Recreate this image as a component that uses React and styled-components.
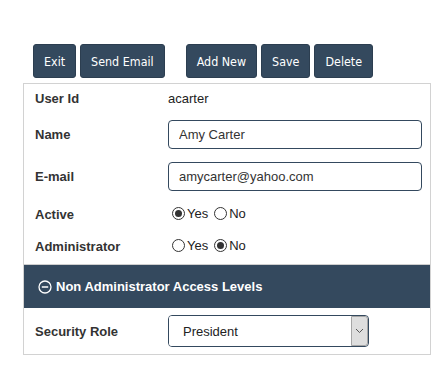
import React from 'react';
import styled, { createGlobalStyle } from 'styled-components';

const GlobalStyle = createGlobalStyle`
  body {
    margin: 8px;
    background: #fff;
    font-family: 'Liberation Sans', Arial, sans-serif;
    color: #333;
  }
`;

const Page = styled.div`
  padding: 36px 0 0 15px;
`;

const Toolbar = styled.div`
  display: flex;
  gap: 21px;
  padding-left: 10px;
  margin-bottom: 5px;
`;

const ButtonGroup = styled.div`
  display: flex;
  gap: 4px;
`;

const Button = styled.button`
  height: 34px;
  padding: 0 10px;
  background: #34495e;
  color: #fff;
  border: 1px solid #2c3e50;
  border-radius: 3px;
  font-family: 'DejaVu Sans Condensed', 'DejaVu Sans', sans-serif;
  font-size: 12.4px;
  cursor: pointer;
`;

const Panel = styled.div`
  width: 408px;
  box-sizing: border-box;
  border: 1px solid #d2d2d2;
`;

const FormBody = styled.div`
  display: flex;
  flex-direction: column;
  gap: 12px;
  padding: 4px 0 9px;
`;

const Row = styled.div`
  display: grid;
  grid-template-columns: 133px 1fr;
  align-items: center;
  min-height: 20px;
  margin-top: ${(p) => p.$mt || 0}px;
  padding: ${(p) => p.$pad || '0'} 8px ${(p) => p.$pad || '0'} 11px;
`;

const Label = styled.div`
  font-size: 13px;
  font-weight: bold;
  color: #333;
  padding-top: ${(p) => (p.$low ? '2px' : '0')};
`;

const Value = styled.div`
  font-size: 13px;
  color: #222;
`;

const TextInput = styled.input`
  box-sizing: border-box;
  width: 100%;
  height: 29px;
  padding: 0 10px;
  border: 1px solid #34495e;
  border-radius: 4px;
  font-family: 'Liberation Sans', Arial, sans-serif;
  font-size: 13px;
  color: #333;
  outline: none;
`;

const RadioGroup = styled.div`
  display: flex;
  align-items: center;
  font-size: 13px;
  color: #222;
`;

const Option = styled.label`
  display: flex;
  align-items: center;
  margin-right: 2px;
`;

const Circle = styled.span`
  box-sizing: border-box;
  width: 13px;
  height: 13px;
  margin: 0 2px 0 4px;
  border: 1px solid #333;
  border-radius: 50%;
  display: flex;
  align-items: center;
  justify-content: center;

  &::after {
    content: '';
    width: 7px;
    height: 7px;
    border-radius: 50%;
    background: ${(p) => (p.$on ? '#333' : 'transparent')};
  }
`;

const SectionHeader = styled.div`
  display: flex;
  align-items: center;
  gap: 4px;
  height: 43px;
  padding-left: 14px;
  border-top: 1px solid #cfcfcf;
  background: #34495e;
  color: #fff;
  font-size: 13px;
  font-weight: bold;
`;

const SelectWrap = styled.div`
  box-sizing: border-box;
  display: flex;
  width: 201px;
  height: 32px;
  border: 1px solid #34495e;
  border-radius: 4px;
  overflow: hidden;
`;

const Select = styled.select`
  flex: 1;
  appearance: none;
  border: none;
  outline: none;
  background: #fff;
  padding: 0 14px;
  font-family: 'Liberation Sans', Arial, sans-serif;
  font-size: 13px;
  color: #222;
`;

const Arrow = styled.span`
  box-sizing: border-box;
  width: 17px;
  display: flex;
  align-items: center;
  justify-content: center;
  background: #dedede;
  border: 1px solid #a6a6a6;
  border-radius: 0 3px 3px 0;
`;

const Radio = ({ options, value }) => (
  <RadioGroup>
    {options.map((o) => (
      <Option key={o}>
        <Circle $on={o === value} />
        {o}
      </Option>
    ))}
  </RadioGroup>
);

export default function App() {
  return (
    <Page>
      <GlobalStyle />
      <Toolbar>
        <ButtonGroup>
          <Button>Exit</Button>
          <Button>Send Email</Button>
        </ButtonGroup>
        <ButtonGroup>
          <Button>Add New</Button>
          <Button>Save</Button>
          <Button>Delete</Button>
        </ButtonGroup>
      </Toolbar>

      <Panel>
        <FormBody>
          <Row>
            <Label>User Id</Label>
            <Value>acarter</Value>
          </Row>
          <Row>
            <Label>Name</Label>
            <TextInput defaultValue="Amy Carter" />
          </Row>
          <Row $mt={1}>
            <Label>E-mail</Label>
            <TextInput defaultValue="amycarter@yahoo.com" />
          </Row>
          <Row>
            <Label $low>Active</Label>
            <Radio options={['Yes', 'No']} value="Yes" />
          </Row>
          <Row>
            <Label $low>Administrator</Label>
            <Radio options={['Yes', 'No']} value="No" />
          </Row>
        </FormBody>

        <SectionHeader>
          <svg width="14" height="14" viewBox="0 0 14 14">
            <circle cx="7" cy="7" r="6" fill="none" stroke="#fff" strokeWidth="1.3" />
            <line x1="3.8" y1="7" x2="10.2" y2="7" stroke="#fff" strokeWidth="1.5" />
          </svg>
          Non Administrator Access Levels
        </SectionHeader>

        <Row $pad="7px">
          <Label>Security Role</Label>
          <SelectWrap>
            <Select defaultValue="President">
              <option>President</option>
            </Select>
            <Arrow>
              <svg width="9" height="6" viewBox="0 0 9 6">
                <polyline points="1,1 4.5,4.5 8,1" fill="none" stroke="#555" strokeWidth="1" />
              </svg>
            </Arrow>
          </SelectWrap>
        </Row>
      </Panel>
    </Page>
  );
}
